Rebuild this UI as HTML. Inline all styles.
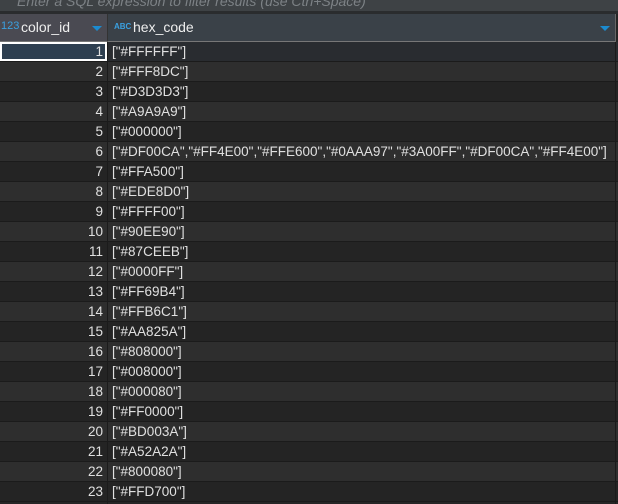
<!DOCTYPE html>
<html><head><style>
body{margin:0;width:618px;height:504px;overflow:hidden;background:#262626;font-family:"Liberation Sans",sans-serif;font-size:13.5px;color:#e0e0e0}
.filter{position:absolute;left:0;top:0;width:618px;height:11px;background:#3e4245;overflow:hidden}
.filter span{position:absolute;left:17px;top:-7px;color:#7d8286;font-style:italic;font-size:14px}
.sep{position:absolute;left:0;top:11px;width:618px;height:3px;background:#2a2c2e}
.hdr{position:absolute;top:14px;height:27px;border-bottom:1px solid #777;font-size:14px}
.h1{left:0;width:107px;background:#4a4a52;border-right:1px solid #333}
.h2{left:108px;width:507px;background:#3a4148;border-right:1px solid #666}
.row{position:absolute;left:0;width:618px;height:19px;border-bottom:1px solid #1b1b1b}
.c1{position:absolute;left:0;width:103px;text-align:right;top:2px}
.c2{position:absolute;left:108px;top:2px;padding-left:4px;white-space:nowrap}
.vl{position:absolute;left:107px;top:42px;width:1px;height:462px;background:#1b1b1b}
.vr{position:absolute;left:615px;top:42px;width:1px;height:462px;background:#1b1b1b}
.tri{position:absolute;width:0;height:0;border-left:5px solid transparent;border-right:5px solid transparent;border-top:5px solid #1b8bd0}
</style></head><body>
<div class="filter"><span>Enter a SQL expression to filter results (use Ctrl+Space)</span></div>
<div class="sep"></div>
<div class="hdr h1"><span style="position:absolute;left:1px;top:6px;color:#3aa0e0;font-size:11px">123</span><span style="position:absolute;left:21px;top:5px;color:#eee">color_id</span><div class="tri" style="left:92px;top:12px"></div></div>
<div class="hdr h2"><span style="position:absolute;left:6px;top:8px;color:#3aa0e0;font-size:8px;font-weight:bold">ABC</span><span style="position:absolute;left:25px;top:5px;color:#eee">hex_code</span><div class="tri" style="left:492px;top:12px"></div></div>
<div id="rows"></div>
<div class="row" style="top:42px;background:#292c30"><div style="position:absolute;left:0;top:0;width:103px;height:15px;background:#2e3f50;border:2px solid #fff"></div><div class="c1">1</div><div class="c2">["#FFFFFF"]</div></div>
<script>
var d=["FFF8DC","D3D3D3","A9A9A9","000000",'DF00CA","#FF4E00","#FFE600","#0AAA97","#3A00FF","#DF00CA","#FF4E00',"FFA500","EDE8D0","FFFF00","90EE90","87CEEB","0000FF","FF69B4","FFB6C1","AA825A","808000","008000","000080","FF0000","BD003A","A52A2A","800080","FFD700"];
var h="";for(var i=0;i<d.length;i++){var n=i+2;h+='<div class="row" style="top:'+(42+20*(n-1))+'px;background:'+(n%2?'#242424':'#2e2e2e')+'"><div class="c1">'+n+'</div><div class="c2">["#'+d[i]+'"]</div></div>';}
document.getElementById("rows").innerHTML=h;
</script>
<div class="vl"></div><div class="vr"></div>
</body></html>
